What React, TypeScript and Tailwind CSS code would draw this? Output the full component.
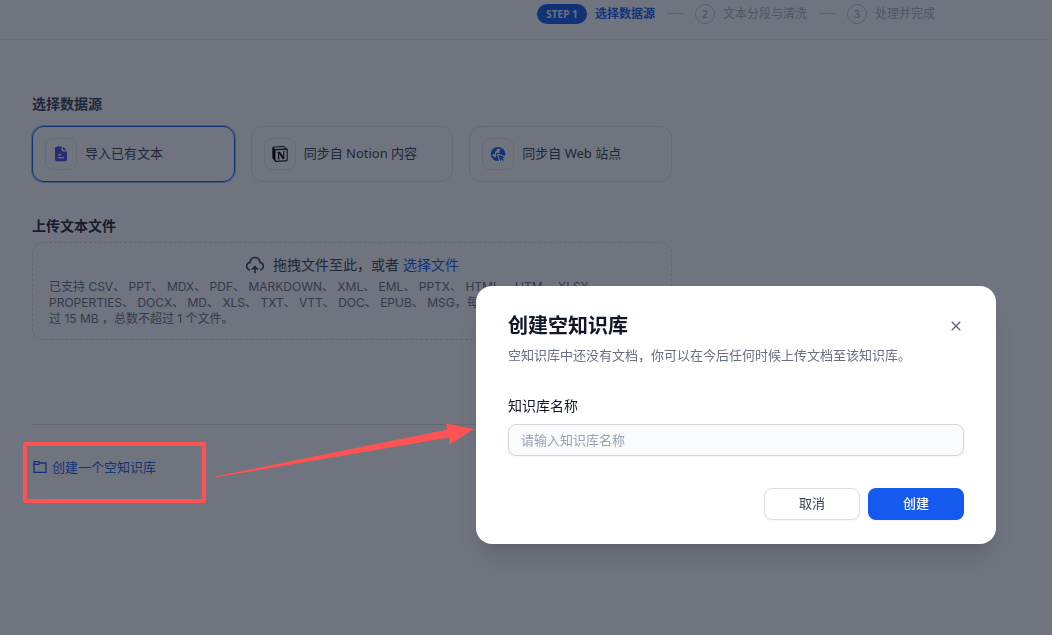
import { useState } from 'react';
import { RiCloseLine, RiFolder6Line, RiUploadCloud2Line } from 'react-icons/ri';
import { SiNotion } from 'react-icons/si';

const FILE_TYPES = [
  'CSV', 'PPT', 'MDX', 'PDF', 'MARKDOWN', 'XML', 'EML', 'PPTX', 'HTML', 'HTM', 'XLSX',
  'PROPERTIES', 'DOCX', 'MD', 'XLS', 'TXT', 'VTT', 'DOC', 'EPUB', 'MSG',
];

function FileIcon() {
  return (
    <svg className="h-4 w-4" viewBox="0 0 16 16" fill="#444ce7">
      <path
        fillRule="evenodd"
        d="M4.4.6h4.300v3.200c0 1 .7 1.700 1.700 1.700h3.600v7.700c0 1.200-.9 2.100-2.100 2.100H4.100c-1.200 0-2.100-.9-2.100-2.100V2.700c0-1.200.9-2.100 2.400-2.100Zm.7 7.500v1.200h3V8.100h-3Zm0 2.900v1.200h5.800V11H5.100Z"
      />
      <path d="M10 .8l3.400 3.400h-2.600c-.5 0-.8-.3-.8-.8V.8Z" />
    </svg>
  );
}

function WebIcon() {
  return (
    <svg className="h-4 w-4" viewBox="0 0 16 16" fill="#155eef">
      <path
        fillRule="evenodd"
        d="M8 1a7 7 0 1 0 .9 13.900L7 8.800c-.2-.7.400-1.300 1.100-1.100l6.900 2A7 7 0 0 0 8 1ZM6.800 2.700h3.600v1.100l-.9.500.1 2.600-1.500.1-.9-.5-1.500 1.600.5 1.500-.2 1.900-1.700-.6-1.900-1.300-.2-1.100 2.700-.6.300-2.400 1.600-1.200V2.700Z"
      />
      <path d="M8.400 8.900l6.600 2.200-2.700 1.200 1.700 1.700-.9.900-1.700-1.700-1.100 2.300L8.400 8.900Z" />
    </svg>
  );
}

const SOURCES = [
  { id: 'file', name: '导入已有文本', icon: <FileIcon /> },
  { id: 'notion', name: '同步自 Notion 内容', icon: <SiNotion className="h-4 w-4 text-black" /> },
  { id: 'web', name: '同步自 Web 站点', icon: <WebIcon /> },
];

function Stepper() {
  return (
    <ol className="flex items-center gap-3 text-[12px] leading-5 text-[#adb5c2]">
      <li className="flex items-center gap-2 font-semibold text-[#155aef]">
        <span className="flex h-5 w-[50px] items-center justify-center rounded-full bg-[#155aef] text-[10px] font-bold text-white/90">
          STEP 1
        </span>
        选择数据源
      </li>
      <li aria-hidden="true" className="h-px w-4 bg-[#c8ced8]" />
      <li className="flex items-center gap-2">
        <span className="flex h-5 w-5 items-center justify-center rounded-full border border-[#c8ced8] text-[10px] font-semibold">2</span>
        文本分段与清洗
      </li>
      <li aria-hidden="true" className="h-px w-4 bg-[#c8ced8]" />
      <li className="flex items-center gap-2">
        <span className="flex h-5 w-5 items-center justify-center rounded-full border border-[#c8ced8] text-[10px] font-semibold">3</span>
        处理并完成
      </li>
    </ol>
  );
}

function CreateDialog() {
  const [name, setName] = useState('');

  return (
    <div className="fixed inset-0 flex items-start justify-end bg-[#101828]/60 pt-[286px] pr-14">
      <div
        role="dialog"
        aria-labelledby="dialog-title"
        className="w-full max-w-[520px] rounded-2xl bg-white px-8 py-6 shadow-xl"
      >
        <div className="flex items-center justify-between">
          <h2 id="dialog-title" className="text-[20px] leading-8 font-bold text-[#101828]">创建空知识库</h2>
          <button type="button" aria-label="关闭" className="flex h-4 w-4 items-center justify-center text-[#676f83]">
            <RiCloseLine className="h-[18px] w-[18px] shrink-0" />
          </button>
        </div>
        <p className="mt-1 text-[13px] leading-[18px] text-[#676f83]">
          空知识库中还没有文档，你可以在今后任何时候上传文档至该知识库。
        </p>
        <form onSubmit={(e) => e.preventDefault()}>
          <label htmlFor="dataset-name" className="mt-8 block text-[14px] leading-5 text-[#101828]">知识库名称</label>
          <input
            id="dataset-name"
            type="text"
            value={name}
            onChange={(e) => setName(e.target.value)}
            placeholder="请输入知识库名称"
            className="mt-2 h-8 w-full rounded-lg border border-[#d0d5dc] bg-[#f9fafb] px-3 text-[13px] text-[#101828] shadow-xs placeholder:text-[#98a2b2]"
          />
          <div className="mt-8 flex justify-end gap-2 text-[13px]">
            <button type="button" className="h-8 w-24 rounded-lg border border-[#dcdfe4] bg-white text-[#354052] shadow-xs">取消</button>
            <button type="submit" className="h-8 w-24 rounded-lg bg-[#155aef] font-medium text-white shadow-xs">创建</button>
          </div>
        </form>
      </div>
    </div>
  );
}

export default function App() {
  const [source, setSource] = useState('file');

  return (
    <div className='relative min-h-screen overflow-hidden bg-white font-["Noto_Sans","Noto_Sans_CJK_SC",sans-serif] text-[#354052]'>
      <header className="flex h-10 items-center justify-center border-b border-[#eceef1] pb-3 pl-[420px]">
        <Stepper />
      </header>

      <main className="max-w-[704px] px-8 pt-[54px]">
        <h3 className="text-[14px] leading-5 font-semibold">选择数据源</h3>
        <div className="mt-3 grid grid-cols-3 gap-4">
          {SOURCES.map((item) => (
            <button
              key={item.id}
              type="button"
              onClick={() => setSource(item.id)}
              className={`flex h-14 items-center gap-2 rounded-xl border px-3 text-[13px] ${
                source === item.id ? 'border-[#155aef] ring-1 ring-[#155aef]/40' : 'border-[#e6e8ec]'
              }`}
            >
              <span className="flex h-8 w-8 items-center justify-center rounded-lg border border-[#e9ebef]">{item.icon}</span>
              {item.name}
            </button>
          ))}
        </div>

        <h3 className="mt-[34px] text-[14px] leading-5 font-semibold text-[#1d2939]">上传文本文件</h3>
        <div className="mt-[6px] rounded-xl border border-dashed border-[#dcdfe5] px-4 py-3">
          <div className="flex h-5 items-center justify-center text-[14px] leading-5">
            <RiUploadCloud2Line className="mr-2 h-5 w-5" />
            <span>拖拽文件至此，或者</span>
            <a href="#upload" className="ml-1 text-[#155aef]">选择文件</a>
          </div>
          <p className='mt-1 font-["Inter","Noto_Sans_CJK_SC",sans-serif] text-[12px] leading-4 text-[#676f83]'>
            已支持 {FILE_TYPES.join('、 ')}，每批最多 1 个文件，每个文件不超过 15 MB ，总数不超过 1 个文件。
          </p>
        </div>

        <hr className="mt-[84px] border-[#e0e3e8]" />
        <a href="#create" className="mt-8 flex w-fit items-center gap-1 text-[13px] leading-5 text-[#155aef]">
          <RiFolder6Line className="h-4 w-4" />
          创建一个空知识库
        </a>
      </main>

      <CreateDialog />

      {/* annotation: link opens the dialog */}
      <div className="pointer-events-none absolute top-[442px] left-[23px] h-[61px] w-[183px] rounded-[2px] border-4 border-[#ff5353]" />
      <svg className="pointer-events-none absolute top-[420px] left-[212px] h-[60px] w-[264px]" viewBox="0 0 264 60" fill="#ff5353">
        <path d="M3 57.400V56.400L235.500 9.500L233.700 3.500L262 9L237.500 24.500L237 17.500L3 57.400Z" />
      </svg>
    </div>
  );
}
